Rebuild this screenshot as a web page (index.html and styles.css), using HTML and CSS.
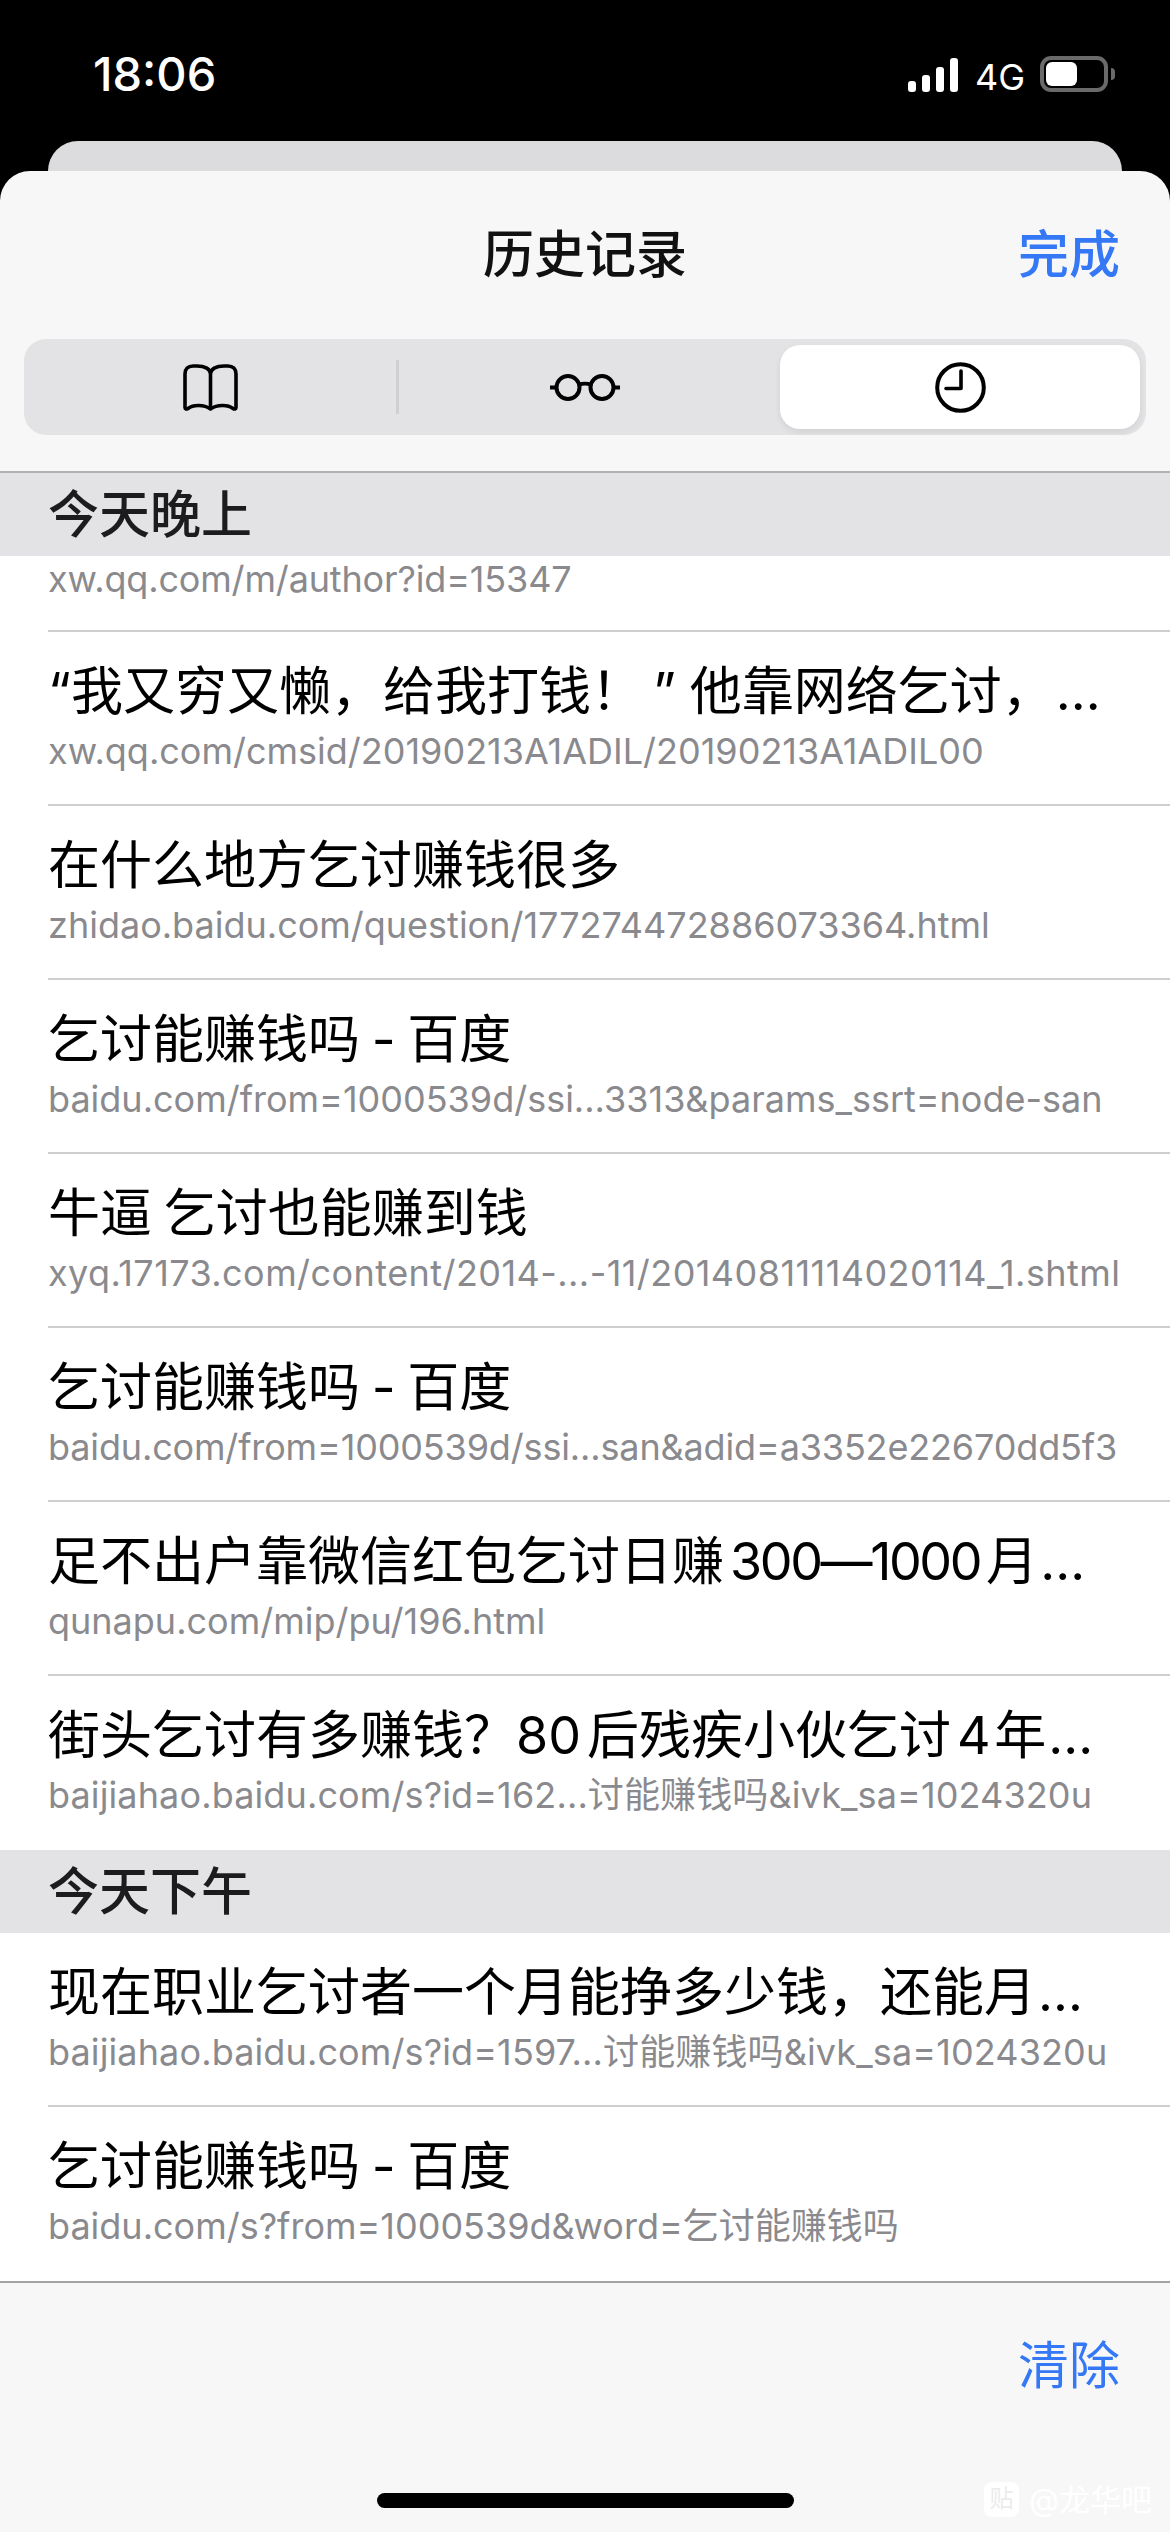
FILE: index.html
```html
<!DOCTYPE html>
<html lang="zh-CN">
<head>
    <meta charset="UTF-8">
    <meta name="viewport" content="width=device-width, initial-scale=1.0">
    <title>历史记录</title>
    <link rel="stylesheet" href="styles.css">
</head>
<body>
    <div class="statusbar">
        <span class="time">18:06</span>
        <div class="status-right">
            <div class="signal"><i class="b1"></i><i class="b2"></i><i class="b3"></i><i class="b4"></i></div>
            <span class="net">4G</span>
            <div class="battery"><div class="battery-fill"></div></div>
            <div class="battery-nub"></div>
        </div>
    </div>
    <div class="back-card"></div>

    <div class="sheet">
        <div class="sheet-head">
            <div class="sheet-title">历史记录</div>
            <div class="link link-strong">完成</div>
        </div>

        <div class="segments">
            <div class="seg">
                <svg width="55" height="47" viewBox="0 0 55 47" fill="none" stroke="#000" stroke-width="3.6" stroke-linejoin="round">
                    <path d="M27.5 44V10C27.500 5 22 2 14 2H10C5 2 2 5 2 10V43.500C2 45 3.500 45.500 5 44.500C10 40.500 21 40.500 27.500 45C34 40.500 45 40.500 50 44.500C51.500 45.500 53 45 53 43.500V10C53 5 50 2 45 2H41C33 2 27.500 5 27.500 10"/>
                </svg>
            </div>
            <div class="seg-line"></div>
            <div class="seg">
                <svg width="70" height="27" viewBox="0 0 70 27" fill="none" stroke="#000" stroke-width="4">
                    <circle cx="18" cy="13.500" r="11.500"/>
                    <circle cx="52" cy="13.500" r="11.500"/>
                    <path d="M29 10.500C32 9.500 38 9.500 41 10.500M0 13.500H6M64 13.500H70"/>
                </svg>
            </div>
            <div></div>
            <div class="seg seg-on">
                <svg width="51" height="51" viewBox="0 0 51 51" fill="none" stroke="#000">
                    <circle cx="25.500" cy="25.500" r="23.300" stroke-width="4"/>
                    <path d="M26 9V26.500H11" stroke-width="3.600" stroke-linecap="round" stroke-linejoin="round"/>
                </svg>
            </div>
        </div>

        <div class="list">
            <div class="section">今天晚上</div>
            <div class="row row-cut">
                <div class="url url-tight">xw.qq.com/m/author?id=15347</div>
            </div>
            <div class="row">
                <div class="name">“我又穷又懒，给我打钱！<span class="close-quote">”</span>他靠网络乞讨，<span class="dots">…</span></div>
                <div class="url">xw.qq.com/cmsid/20190213A1ADIL/20190213A1ADIL00</div>
            </div>
            <div class="row">
                <div class="name">在什么地方乞讨赚钱很多</div>
                <div class="url">zhidao.baidu.com/question/177274472886073364.html</div>
            </div>
            <div class="row">
                <div class="name">乞讨能赚钱吗 - 百度</div>
                <div class="url">baidu.com/from=1000539d/ssi...3313&amp;params_ssrt=node-san</div>
            </div>
            <div class="row">
                <div class="name">牛逼 乞讨也能赚到钱</div>
                <div class="url url-wide">xyq.17173.com/content/2014-...-11/20140811114020114_1.shtml</div>
            </div>
            <div class="row">
                <div class="name">乞讨能赚钱吗 - 百度</div>
                <div class="url url-tight">baidu.com/from=1000539d/ssi...san&amp;adid=a3352e22670dd5f3</div>
            </div>
            <div class="row">
                <div class="name">足不出户靠微信红包乞讨日赚<span class="num">300—1000</span>月<span class="dots">…</span></div>
                <div class="url">qunapu.com/mip/pu/196.html</div>
            </div>
            <div class="row row-last">
                <div class="name">街头乞讨有多赚钱？<span class="num num-first">80</span>后残疾小伙乞讨<span class="num">4</span>年<span class="dots">…</span></div>
                <div class="url url-loose">baijiahao.baidu.com/s?id=162...讨能赚钱吗&amp;ivk_sa=1024320u</div>
            </div>
            <div class="section">今天下午</div>
            <div class="row">
                <div class="name">现在职业乞讨者一个月能挣多少钱，还能月<span class="dots">…</span></div>
                <div class="url url-loose">baijiahao.baidu.com/s?id=1597...讨能赚钱吗&amp;ivk_sa=1024320u</div>
            </div>
            <div class="row row-last">
                <div class="name">乞讨能赚钱吗 - 百度</div>
                <div class="url">baidu.com/s?from=1000539d&amp;word=乞讨能赚钱吗</div>
            </div>
        </div>

        <div class="sheet-foot">
            <div class="foot-actions"><span class="link">清除</span></div>
            <div class="home-bar"></div>
        </div>
    </div>

    <div class="watermark">
        <span class="wm-icon">贴</span>
        <span>@龙华吧</span>
    </div>
</body>
</html>
```

FILE: styles.css
```css
* {
    box-sizing: border-box;
}

html, body {
    margin: 0;
    padding: 0;
}

body {
    position: relative;
    width: 1170px;
    height: 2532px;
    overflow: hidden;
    background: #000;
    font-family: Inter, "Noto Sans CJK SC", sans-serif;
}

/* 状态栏 */
.statusbar {
    height: 141px;
    padding: 46px 55px 0 93px;
    display: flex;
    justify-content: space-between;
    align-items: flex-start;
    color: #fff;
}

.time {
    font-size: 47px;
    font-weight: 500;
    line-height: 56px;
}

.status-right {
    display: flex;
    align-items: center;
    height: 56px;
}

.signal {
    display: flex;
    align-items: flex-end;
    gap: 6px;
    height: 34px;
    margin-top: 1px;
}

.signal i {
    display: block;
    width: 8px;
    background: #fff;
    border-radius: 3px;
}

.b1 { height: 11px; }
.b2 { height: 17px; }
.b3 { height: 25px; }
.b4 { height: 34px; }

.net {
    width: 48px;
    margin-left: 17px;
    font-size: 36px;
    line-height: 40px;
    margin-top: 5px;
}

.battery {
    margin-left: 17px;
    width: 68px;
    height: 36px;
    border: 4px solid #6a6a6a;
    border-radius: 11px;
    padding: 2px;
}

.battery-fill {
    width: 31px;
    height: 24px;
    background: #fff;
    border-radius: 6px;
}

.battery-nub {
    width: 4px;
    height: 12px;
    margin-left: 3px;
    background: #6a6a6a;
    border-radius: 0 4px 4px 0;
}

.back-card {
    height: 30px;
    margin: 0 48px;
    background: #dcdcde;
    border-radius: 30px 30px 0 0;
}

/* 弹出层 */
.sheet {
    height: 2361px;
    background: #f7f7f8;
    border-radius: 30px 30px 0 0;
    overflow: hidden;
}

.sheet-head {
    height: 168px;
    padding: 48px 50px 0 48px;
    display: flex;
    justify-content: flex-end;
    align-items: flex-start;
    position: relative;
}

.sheet-title {
    position: absolute;
    left: 0;
    right: 0;
    top: 52px;
    text-align: center;
    font-size: 51px;
    font-weight: 500;
    line-height: 64px;
    color: #111;
}

.link {
    font-size: 51px;
    line-height: 64px;
    color: #3478f6;
    margin-top: 4px;
}

.link-strong {
    font-weight: 500;
}

.segments {
    width: 1122px;
    height: 96px;
    margin-left: 24px;
    padding: 6px;
    display: grid;
    grid-template-columns: 1fr 15px 1fr 15px 1fr;
    background: #e3e3e5;
    border-radius: 22px;
}

.seg {
    display: flex;
    align-items: center;
    justify-content: center;
}

.seg-line {
    width: 3px;
    height: 54px;
    margin: 15px auto 0;
    background: #d0d0d2;
}

.seg-on {
    background: #fff;
    border-radius: 20px;
    box-shadow: 0 3px 6px rgba(0, 0, 0, 0.08);
}

/* 列表 */
.list {
    margin-top: 36px;
    background: #fff;
    border-top: 2px solid #b2b2b4;
    border-bottom: 2px solid #a2a2a4;
}

.section {
    height: 83px;
    padding-left: 48px;
    background: #e3e3e5;
    color: #1c1c1e;
    font-size: 51px;
    font-weight: 500;
    line-height: 83px;
}

.row {
    height: 174px;
    margin-left: 48px;
    padding-top: 26px;
    border-bottom: 2px solid #cfcfd1;
}

.row-cut {
    height: 76px;
    padding-top: 0;
}

.row-last {
    border-bottom: 0;
}

.name {
    font-size: 52px;
    line-height: 68px;
    color: #000;
    white-space: nowrap;
    word-spacing: -3px;
}

.close-quote {
    margin: 0 14px 0 10px;
}

.num {
    margin: 0 6px;
    letter-spacing: -2.4px;
}

.num-first {
    margin-left: 0;
    letter-spacing: 0;
}

.dots {
    margin-left: 2px;
    letter-spacing: 3px;
}

.url {
    margin-top: 2px;
    font-size: 36px;
    line-height: 46px;
    color: #8a8a8e;
    white-space: nowrap;
}

.row-cut .url {
    margin-top: 0;
}

.url-tight {
    letter-spacing: -0.15px;
}

.url-loose {
    letter-spacing: 0.12px;
}

.url-wide {
    letter-spacing: 0.44px;
}

.sheet-foot {
    padding: 0 50px 0 52px;
}

.foot-actions {
    display: flex;
    justify-content: flex-end;
    padding-top: 47px;
}

.home-bar {
    width: 417px;
    height: 15px;
    margin: 95px 0 0 325px;
    background: #000;
    border-radius: 8px;
}

/* 水印 */
.watermark {
    position: absolute;
    left: 984px;
    top: 2482px;
    display: flex;
    align-items: center;
    gap: 10px;
    font-size: 31px;
    line-height: 35px;
    color: #fff;
    white-space: nowrap;
}

.wm-icon {
    width: 35px;
    height: 35px;
    border-radius: 8px;
    background: #fff;
    color: #ececec;
    font-size: 24px;
    text-align: center;
    line-height: 33px;
}
```
